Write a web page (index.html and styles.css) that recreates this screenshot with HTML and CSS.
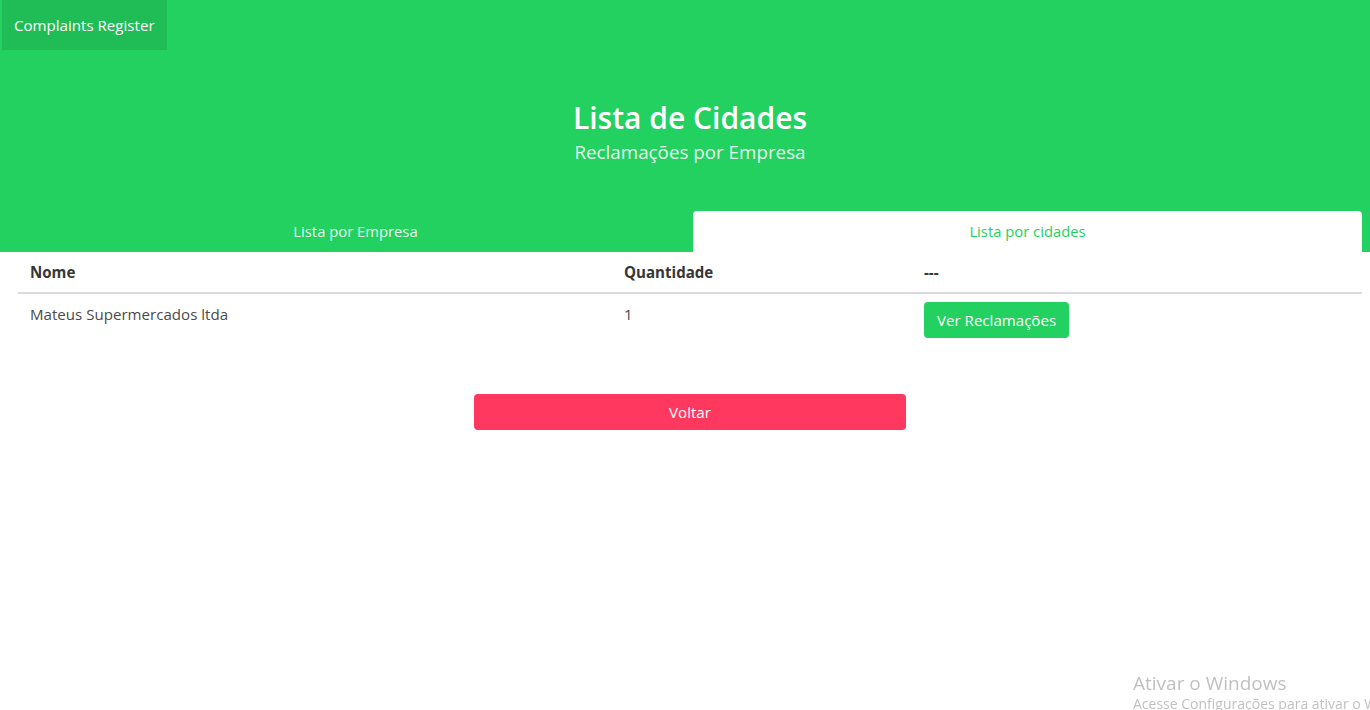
FILE: index.html
```html
<!DOCTYPE html>
<html lang="pt-BR">
<head>
<meta charset="utf-8">
<title>Complaints Register</title>
<link rel="stylesheet" href="styles.css">
</head>
<body>
<section class="hero">
  <nav class="navbar">
    <a class="brand-item" href="#">Complaints Register</a>
  </nav>
  <div class="hero-body">
    <h1 class="title">Lista de Cidades</h1>
    <h2 class="subtitle">Reclamações por Empresa</h2>
  </div>
  <div class="hero-foot">
    <ul class="tabs">
      <li class="tab tab-first"><a href="#">Lista por Empresa</a></li>
      <li class="tab is-active"><a href="#">Lista por cidades</a></li>
    </ul>
  </div>
</section>
<main class="content">
  <table class="table">
    <thead>
      <tr>
        <th class="col-name">Nome</th>
        <th class="col-qty">Quantidade</th>
        <th class="col-act">---</th>
      </tr>
    </thead>
    <tbody>
      <tr>
        <td>Mateus Supermercados ltda</td>
        <td>1</td>
        <td><a class="button is-success" href="#">Ver Reclamações</a></td>
      </tr>
    </tbody>
  </table>
  <div class="back-row">
    <a class="button is-danger is-wide" href="#">Voltar</a>
  </div>
</main>
<div class="watermark">
  <div class="wm-title">Ativar o Windows</div>
  <div class="wm-sub">Acesse Configurações para ativar o Windows.</div>
</div>
</body>
</html>
```

FILE: styles.css
```css
* { box-sizing: border-box; }
html, body { margin: 0; padding: 0; }
body {
  font-family: "Open Sans", "Noto Sans", sans-serif;
  font-size: 15.1px;
  line-height: 24px;
  color: #4a4a4a;
  background: #fff;
  overflow: hidden;
  height: 710px;
}
a { text-decoration: none; }

.hero { background: #23d160; color: #fff; }
.navbar { height: 52px; display: flex; align-items: flex-start; padding-left: 2px; }
.brand-item {
  display: flex; align-items: center;
  height: 50px;
  padding: 0 12px;
  color: #fff;
  background: #20bc56;
}
.hero-body { padding: 48px 8px 46px 18px; text-align: center; }
.title {
  margin: 0 0 24px;
  font-size: 30px;
  font-weight: 600;
  line-height: 36px;
  color: #fff;
}
.subtitle {
  margin: -20px 0 0;
  font-size: 18.8px;
  font-weight: 400;
  line-height: 25px;
  color: rgba(255,255,255,0.9);
}
.hero-foot { padding: 0 8px 0 18px; }
.tabs { display: flex; list-style: none; margin: 0; padding: 0; }
.tab { flex: 1 1 0; }
.tab-first { flex: 0 0 675px; }
.tab a {
  display: block;
  text-align: center;
  padding: 8px 16px 9px;
  line-height: 24px;
  font-size: 14.8px;
  color: rgba(255,255,255,0.92);
  border-radius: 4px 4px 0 0;
}
.tab.is-active a { background: #fff; color: #23d160; }

.content { padding: 0 8px 0 18px; }
.table { width: 100%; border-collapse: collapse; }
.table th, .table td { text-align: left; vertical-align: top; padding: 8px 12px; }
.table th { color: #363636; font-weight: 700; border-bottom: 2px solid #dbdbdb; }
.col-name { width: 594px; }
.col-qty { width: 300px; }
.button {
  display: inline-flex; align-items: center; justify-content: center;
  height: 36px;
  padding: 0 12px;
  border: 1px solid transparent;
  border-radius: 4px;
  color: #fff;
  font-size: 15.1px;
}
.is-success { background: #23d160; }
.is-danger { background: #ff3860; }
.back-row { display: flex; justify-content: center; margin-top: 48px; }
.is-wide { width: 432px; }

.watermark {
  position: fixed; left: 1133px; top: 671px;
  color: rgba(140,140,140,0.55);
  white-space: nowrap;
  pointer-events: none;
}
.wm-title { font-size: 19px; line-height: 24px; }
.wm-sub { font-size: 14px; line-height: 18px; }
```
